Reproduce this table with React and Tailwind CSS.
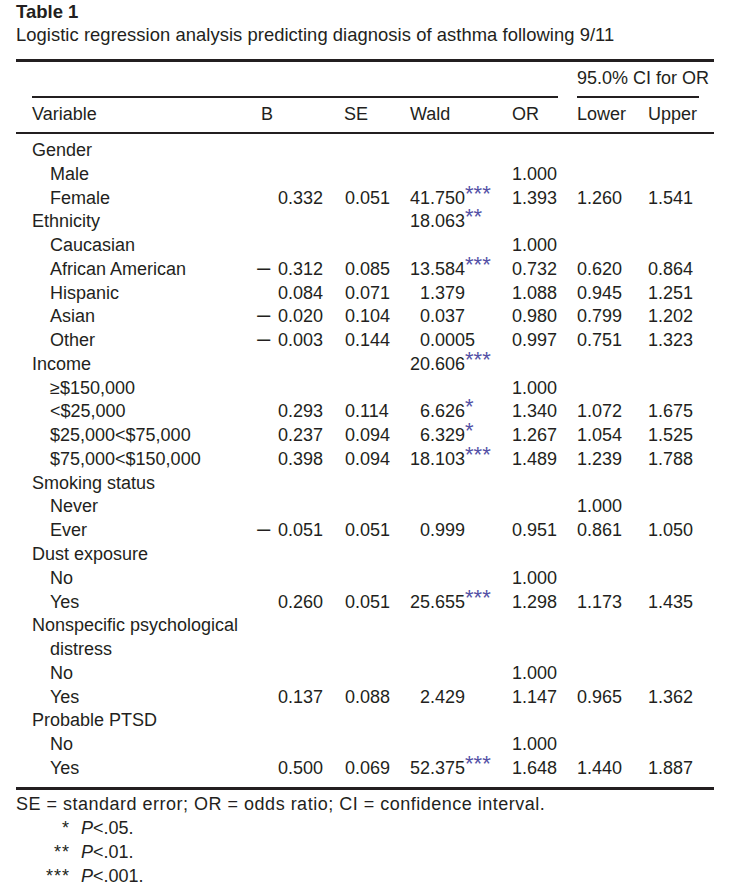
import React from "react";

const rows = [
  { l: "Gender", i: 0 },
  { l: "Male", i: 1, or: "1.000" },
  { l: "Female", i: 1, b: "0.332", se: "0.051", w: "41.750", s: "***", or: "1.393", lo: "1.260", up: "1.541" },
  { l: "Ethnicity", i: 0, w: "18.063", s: "**" },
  { l: "Caucasian", i: 1, or: "1.000" },
  { l: "African American", i: 1, b: "-0.312", se: "0.085", w: "13.584", s: "***", or: "0.732", lo: "0.620", up: "0.864" },
  { l: "Hispanic", i: 1, b: "0.084", se: "0.071", w: "1.379", or: "1.088", lo: "0.945", up: "1.251" },
  { l: "Asian", i: 1, b: "-0.020", se: "0.104", w: "0.037", or: "0.980", lo: "0.799", up: "1.202" },
  { l: "Other", i: 1, b: "-0.003", se: "0.144", w: "0.0005", or: "0.997", lo: "0.751", up: "1.323" },
  { l: "Income", i: 0, w: "20.606", s: "***" },
  { l: "\u2265$150,000", i: 1, or: "1.000" },
  { l: "<$25,000", i: 1, b: "0.293", se: "0.114", w: "6.626", s: "*", or: "1.340", lo: "1.072", up: "1.675" },
  { l: "$25,000<$75,000", i: 1, b: "0.237", se: "0.094", w: "6.329", s: "*", or: "1.267", lo: "1.054", up: "1.525" },
  { l: "$75,000<$150,000", i: 1, b: "0.398", se: "0.094", w: "18.103", s: "***", or: "1.489", lo: "1.239", up: "1.788" },
  { l: "Smoking status", i: 0 },
  { l: "Never", i: 1, lo: "1.000" },
  { l: "Ever", i: 1, b: "-0.051", se: "0.051", w: "0.999", or: "0.951", lo: "0.861", up: "1.050" },
  { l: "Dust exposure", i: 0 },
  { l: "No", i: 1, or: "1.000" },
  { l: "Yes", i: 1, b: "0.260", se: "0.051", w: "25.655", s: "***", or: "1.298", lo: "1.173", up: "1.435" },
  { l: "Nonspecific psychological", i: 0 },
  { l: "distress", i: 1 },
  { l: "No", i: 1, or: "1.000" },
  { l: "Yes", i: 1, b: "0.137", se: "0.088", w: "2.429", or: "1.147", lo: "0.965", up: "1.362" },
  { l: "Probable PTSD", i: 0 },
  { l: "No", i: 1, or: "1.000" },
  { l: "Yes", i: 1, b: "0.500", se: "0.069", w: "52.375", s: "***", or: "1.648", lo: "1.440", up: "1.887" },
];

const cols = "grid grid-cols-[208px_83px_87px_102px_65px_71px_66px] pl-4";

function BVal({ v }) {
  if (!v) return null;
  if (v.startsWith("-")) {
    return (
      <span>
        <span className="inline-block scale-x-150 origin-right mr-[6px]">{"\u2212"}</span>
        {v.slice(1)}
      </span>
    );
  }
  return <span>{v}</span>;
}

function Wald({ v, s }) {
  if (!v) return null;
  const [a, b] = v.split(".");
  return (
    <span className="whitespace-nowrap">
      <span className="inline-block w-[20px] text-right">{a}</span>.{b}
      {s && (
        <span className="relative -top-[3px] text-[22px] leading-[0] text-[#5451a6]">{s}</span>
      )}
    </span>
  );
}

export default function App() {
  return (
    <div className="w-[751px] h-[895px] bg-white text-[#231f20] font-['Liberation_Sans',Arial,sans-serif] text-[18px] overflow-hidden">
      <div className="pl-4 font-bold leading-[23px] text-[18.5px]">Table 1</div>
      <div className="pl-4 leading-[24px] text-[18.4px] tracking-[0.05px]">
        Logistic regression analysis predicting diagnosis of asthma following 9/11
      </div>

      <div className="ml-4 w-[698px]">
        <div className="mt-[12px] h-[3px] bg-[#231f20]" />
        <div className={`${cols} pt-[4px] leading-[24px]`}>
          <div className="col-span-5" />
          <div className="col-span-2 whitespace-nowrap">95.0% CI for OR</div>
        </div>
        <div className={`${cols} mt-[6px]`}>
          <div className="col-span-5 mr-[19px] h-[2px] bg-[#231f20]" />
          <div className="col-span-2 mr-[15px] h-[2px] bg-[#231f20]" />
        </div>
        <div className={`${cols} pt-[4px] leading-[24px]`}>
          <div>Variable</div>
          <div className="pl-[21px]">B</div>
          <div className="pl-[21px]">SE</div>
          <div>Wald</div>
          <div>OR</div>
          <div>Lower</div>
          <div>Upper</div>
        </div>
        <div className="mt-[6px] h-[2px] bg-[#231f20]" />

        <div className="pt-[5px] pb-[6px]">
          {rows.map((r, k) => (
            <div key={k} className={`${cols} h-[23.78px] leading-[23.78px] whitespace-nowrap`}>
              <div className={r.i ? "pl-[18px]" : ""}>{r.l}</div>
              <div className="text-right">
                <BVal v={r.b} />
              </div>
              <div className="pl-[22px]">{r.se}</div>
              <div>
                <Wald v={r.w} s={r.s} />
              </div>
              <div>{r.or}</div>
              <div>{r.lo}</div>
              <div>{r.up}</div>
            </div>
          ))}
        </div>
        <div className="h-[3px] bg-[#231f20]" />
      </div>

      <div className="leading-[24px] pt-[2px]">
        <div className="pl-4 whitespace-nowrap tracking-[0.5px]">
          SE = standard error; OR = odds ratio; CI = confidence interval.
        </div>
        {["*", "**", "***"].map((a, k) => (
          <div key={k} className="flex">
            <span className="w-[70px] text-right tracking-[1px]">{a}</span>
            <span className="ml-[11px]">
              <span className="italic">P</span>&lt;{[".05.", ".01.", ".001."][k]}
            </span>
          </div>
        ))}
      </div>
    </div>
  );
}
